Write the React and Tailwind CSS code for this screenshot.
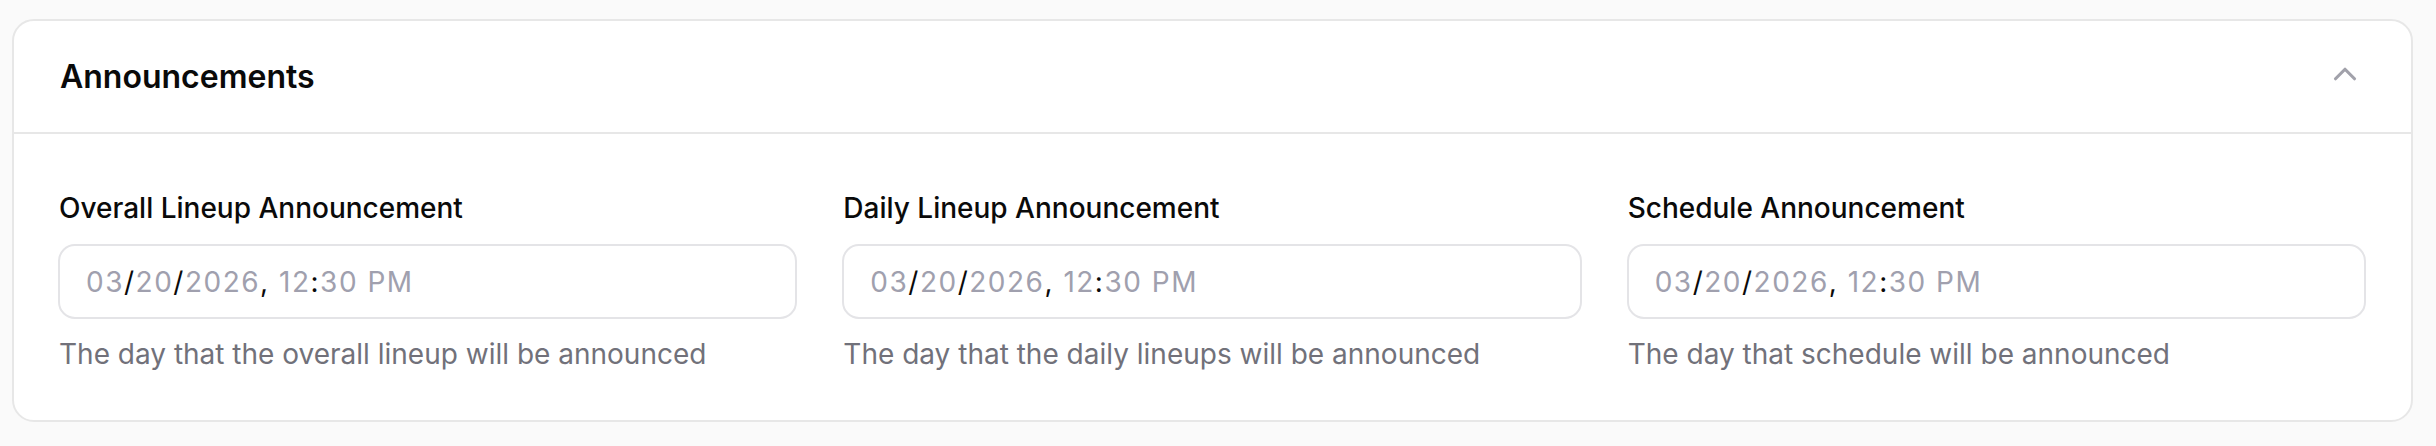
import React from "react";
import { ChevronUp } from "lucide-react";

const fields = [
  { label: "Overall Lineup Announcement", help: "The day that the overall lineup will be announced" },
  { label: "Daily Lineup Announcement", help: "The day that the daily lineups will be announced" },
  { label: "Schedule Announcement", help: "The day that schedule will be announced" },
];

function DateTimeValue() {
  // segments look like placeholders, separators stay dark
  return (
    <div className="flex items-center whitespace-pre text-[28px] leading-none tracking-[1.5px]">
      <span className="text-[#a0a0ae]">03</span>
      <span className="text-[#0a0a0a]">/</span>
      <span className="text-[#a0a0ae]">20</span>
      <span className="text-[#0a0a0a]">/</span>
      <span className="text-[#a0a0ae]">2026</span>
      <span className="text-[#0a0a0a]">, </span>
      <span className="text-[#a0a0ae]">12</span>
      <span className="text-[#0a0a0a]">:</span>
      <span className="text-[#a0a0ae]">30 PM</span>
    </div>
  );
}

export default function App() {
  return (
    <div
      className="min-h-[446px] bg-[#fafafa] pt-[19px] pl-[12px] pr-[23px]"
      style={{ fontFamily: "Inter, 'Noto Sans', sans-serif" }}
    >
      <div className="rounded-[22px] border-2 border-[#e7e7e7] bg-white">
        <div className="flex h-[113px] items-center justify-between border-b-2 border-[#e7e7e7] pl-[46px] pr-[47px]">
          <h2 className="text-[32px] font-semibold text-[#0a0a0a]">Announcements</h2>
          <ChevronUp className="mb-[5px] h-[38px] w-[38px] text-[#a1a1aa]" strokeWidth={2} />
        </div>
        <div className="grid grid-cols-3 gap-[45px] pt-[54px] pb-[46px] pl-[44px] pr-[45px]">
          {fields.map((f) => (
            <div key={f.label} className="flex flex-col">
              <label className="pl-[1px] text-[28px] font-medium leading-[40px] text-[#0a0a0a]">
                {f.label}
              </label>
              <div className="mt-[16px] flex h-[75px] items-center rounded-[17px] border-2 border-[#e4e4e7] pl-[26px]">
                <DateTimeValue />
              </div>
              <p className="mt-[15px] pl-[1px] text-[28px] leading-[40px] text-[#71717a]">{f.help}</p>
            </div>
          ))}
        </div>
      </div>
    </div>
  );
}
